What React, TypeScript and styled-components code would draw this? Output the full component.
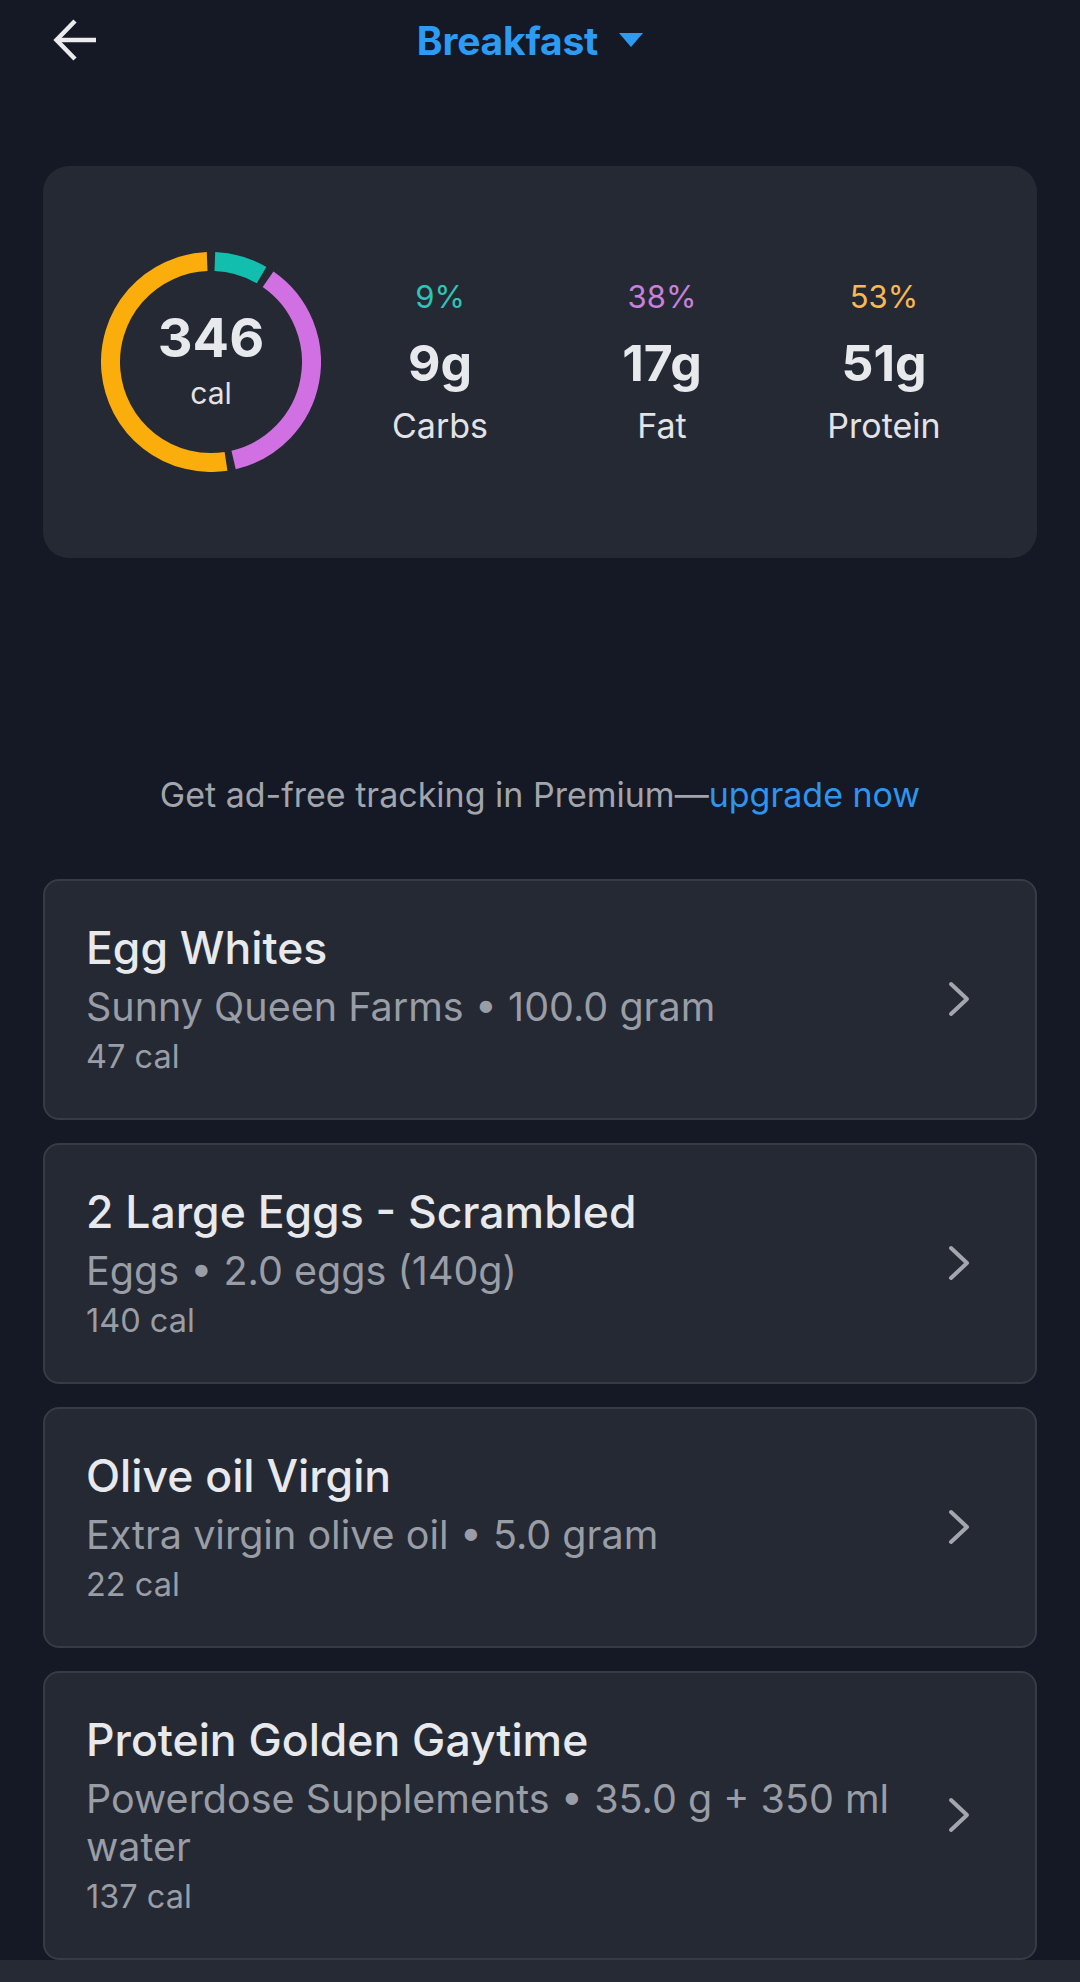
import styled, { createGlobalStyle } from "styled-components";

const GlobalStyle = createGlobalStyle`
  html, body {
    margin: 0;
    padding: 0;
    background-color: #141925;
  }
  body {
    font-family: Inter, "Noto Sans", "Liberation Sans", sans-serif;
    color: #e8e9ec;
  }
  * {
    box-sizing: border-box;
  }
`;

const Page = styled.div`
  width: 1080px;
  min-height: 1982px;
  background-color: #141925;
  display: flex;
  flex-direction: column;
`;

const Header = styled.header`
  height: 80px;
  display: grid;
  grid-template-columns: 1fr auto 1fr;
  align-items: center;
`;

const BackButton = styled.button`
  width: 44px;
  height: 44px;
  margin-left: 53px;
  padding: 0;
  background: none;
  border: none;
  display: flex;
  cursor: pointer;
`;

const TitleGroup = styled.div`
  display: flex;
  align-items: center;
  gap: 21px;
  margin-right: 20px;
`;

const Title = styled.h1`
  margin: 0;
  font-size: 39px;
  font-weight: 700;
  color: #2c9bf4;
  letter-spacing: -0.2px;
`;

const Summary = styled.section`
  margin: 86px 43px 0;
  height: 392px;
  background-color: #252934;
  border-radius: 26px;
  display: flex;
  align-items: center;
  padding-left: 58px;
`;

const Ring = styled.div`
  position: relative;
  width: 220px;
  height: 220px;
  flex-shrink: 0;
`;

const RingLabel = styled.div`
  position: absolute;
  inset: 0;
  display: flex;
  flex-direction: column;
  align-items: center;
  justify-content: center;
  margin-top: -6px;
`;

const Calories = styled.div`
  font-size: 54px;
  line-height: 60px;
  font-weight: 700;
  color: #e8e9ec;
`;

const CalUnit = styled.div`
  font-size: 30px;
  line-height: 36px;
  margin-top: 7px;
  color: #e2e3e6;
`;

const Macros = styled.div`
  display: grid;
  grid-template-columns: repeat(3, 222px);
  margin-left: 8px;
`;

const Macro = styled.div`
  display: flex;
  flex-direction: column;
  align-items: center;
`;

const Percent = styled.div<{ tint: string }>`
  font-size: 31px;
  line-height: 40px;
  color: ${(props) => props.tint};
`;

const Grams = styled.div`
  font-size: 50px;
  line-height: 56px;
  font-weight: 700;
  margin-top: 18px;
  color: #e8e9ec;
`;

const MacroName = styled.div`
  font-size: 34px;
  line-height: 44px;
  margin-top: 13px;
  color: #e2e3e6;
`;

const Premium = styled.p`
  margin: 215px 0 0;
  text-align: center;
  font-size: 34px;
  line-height: 44px;
  color: #a2a5ac;
`;

const Upgrade = styled.a`
  color: #2e95ee;
  text-decoration: none;
`;

const FoodList = styled.div`
  display: flex;
  flex-direction: column;
  gap: 23px;
  padding: 62px 43px 0;
`;

const FoodCard = styled.div`
  background-color: #252934;
  border: 2px solid #373b46;
  border-radius: 16px;
  display: flex;
  align-items: center;
  padding: 40px 64px 41px 41px;
`;

const FoodText = styled.div`
  flex: 1;
  max-width: 846px;
  margin-right: auto;
`;

const FoodName = styled.div`
  font-size: 44.5px;
  line-height: 54px;
  font-weight: 500;
  color: #e8e9ec;
`;

const FoodDetail = styled.div`
  font-size: 39.5px;
  line-height: 48px;
  margin-top: 8px;
  color: #999da5;
`;

const FoodCal = styled.div`
  font-size: 32.5px;
  line-height: 40px;
  margin-top: 6px;
  color: #999da5;
`;

const Chevron = styled.svg`
  width: 24px;
  height: 36px;
  flex-shrink: 0;
`;

const BottomBar = styled.div`
  margin-top: auto;
  height: 22px;
  background-color: #252a35;
`;

const polar = (deg: number, r: number) => {
  const a = ((deg - 90) * Math.PI) / 180;
  return [110 + r * Math.cos(a), 110 + r * Math.sin(a)];
};

const arc = (from: number, to: number, r: number) => {
  const [x1, y1] = polar(from, r);
  const [x2, y2] = polar(to, r);
  const large = to - from > 180 ? 1 : 0;
  return `M ${x1} ${y1} A ${r} ${r} 0 ${large} 1 ${x2} ${y2}`;
};

const macros = [
  { name: "Carbs", pct: 9, grams: "9g", ring: "#12bfae", text: "#2ec4b6" },
  { name: "Fat", pct: 38, grams: "17g", ring: "#d070e2", text: "#c980dc" },
  { name: "Protein", pct: 53, grams: "51g", ring: "#fbad0c", text: "#f6b956" },
];

const foods = [
  { name: "Egg Whites", detail: "Sunny Queen Farms • 100.0 gram", cal: "47 cal" },
  { name: "2 Large Eggs - Scrambled", detail: "Eggs • 2.0 eggs (140g)", cal: "140 cal" },
  { name: "Olive oil Virgin", detail: "Extra virgin olive oil • 5.0 gram", cal: "22 cal" },
  { name: "Protein Golden Gaytime", detail: "Powerdose Supplements • 35.0 g + 350 ml water", cal: "137 cal" },
];

function Donut() {
  let start = 0;
  return (
    <Ring>
      <svg width="220" height="220" viewBox="0 0 220 220">
        {macros.map((m) => {
          const end = start + (m.pct / 100) * 360;
          const d = arc(start + 2.2, end - 2.2, 100.5);
          start = end;
          return <path key={m.name} d={d} fill="none" stroke={m.ring} strokeWidth="19" />;
        })}
      </svg>
      <RingLabel>
        <Calories>346</Calories>
        <CalUnit>cal</CalUnit>
      </RingLabel>
    </Ring>
  );
}

export default function App() {
  return (
    <Page>
      <GlobalStyle />
      <Header>
        <BackButton>
          <svg width="44" height="44" viewBox="0 0 44 44" fill="none" stroke="#ebebed" strokeWidth="4.5" strokeLinecap="butt" strokeLinejoin="miter">
            <path d="M3 22 H43" />
            <path d="M22 3 L3.5 22 L22 41" />
          </svg>
        </BackButton>
        <TitleGroup>
          <Title>Breakfast</Title>
          <svg width="24" height="14" viewBox="0 0 24 14">
            <path d="M0 0 H24 L12 14 Z" fill="#2c9bf4" />
          </svg>
        </TitleGroup>
        <div />
      </Header>

      <Summary>
        <Donut />
        <Macros>
          {macros.map((m) => (
            <Macro key={m.name}>
              <Percent tint={m.text}>{m.pct}%</Percent>
              <Grams>{m.grams}</Grams>
              <MacroName>{m.name}</MacroName>
            </Macro>
          ))}
        </Macros>
      </Summary>

      <Premium>
        Get ad-free tracking in Premium—<Upgrade href="#">upgrade now</Upgrade>
      </Premium>

      <FoodList>
        {foods.map((f) => (
          <FoodCard key={f.name}>
            <FoodText>
              <FoodName>{f.name}</FoodName>
              <FoodDetail>{f.detail}</FoodDetail>
              <FoodCal>{f.cal}</FoodCal>
            </FoodText>
            <Chevron viewBox="0 0 24 36" fill="none" stroke="#a3a6ad" strokeWidth="4" strokeLinecap="round" strokeLinejoin="round">
              <path d="M4 3 L20 18 L4 33" />
            </Chevron>
          </FoodCard>
        ))}
      </FoodList>

      <BottomBar />
    </Page>
  );
}
